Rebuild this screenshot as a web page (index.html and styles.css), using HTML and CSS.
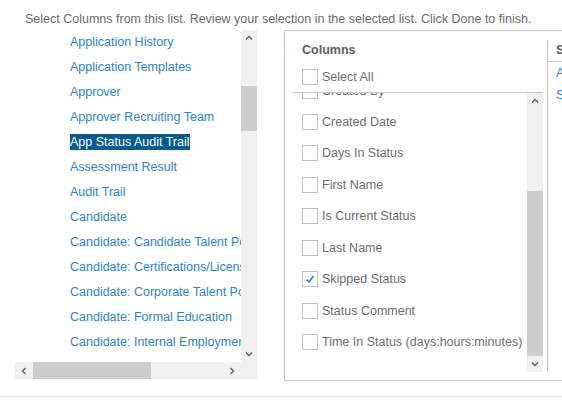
FILE: index.html
```
<!DOCTYPE html>
<html>
<head>
<meta charset="utf-8">
<link rel="stylesheet" href="styles.css">
</head>
<body>
<div class="page">
  <p class="intro">Select Columns from this list. Review your selection in the selected list. Click Done to finish.</p>
  <div class="main">
    <div class="left">
      <div class="hview">
        <div class="viewport">
          <ul class="tables">
            <li><span>Application History</span></li>
            <li><span>Application Templates</span></li>
            <li><span>Approver</span></li>
            <li><span>Approver Recruiting Team</span></li>
            <li><span class="active">App Status Audit Trail</span></li>
            <li><span>Assessment Result</span></li>
            <li><span>Audit Trail</span></li>
            <li><span>Candidate</span></li>
            <li><span>Candidate: Candidate Talent Pool</span></li>
            <li><span>Candidate: Certifications/Licenses</span></li>
            <li><span>Candidate: Corporate Talent Pool</span></li>
            <li><span>Candidate: Formal Education</span></li>
            <li><span>Candidate: Internal Employment</span></li>
            <li><span>Candidate: Geographic Mobility</span></li>
          </ul>
        </div>
        <div class="hscroll">
          <div class="sbtn hbtn"><svg width="8" height="8" viewBox="0 0 8 8"><polyline points="5.5,1 2.5,4 5.5,7" fill="none" stroke="#5f5f5f" stroke-width="1.4"/></svg></div>
          <div class="hthumb"></div>
          <div class="htrack"></div>
          <div class="sbtn hbtn"><svg width="8" height="8" viewBox="0 0 8 8"><polyline points="2.5,1 5.5,4 2.5,7" fill="none" stroke="#5f5f5f" stroke-width="1.4"/></svg></div>
        </div>
      </div>
      <div class="vscroll">
        <div class="sbtn vbtn"><svg width="8" height="8" viewBox="0 0 8 8"><polyline points="1,5.5 4,2.5 7,5.5" fill="none" stroke="#5f5f5f" stroke-width="1.4"/></svg></div>
        <div class="vtrack left-track"><div class="vthumb left-thumb"></div></div>
        <div class="sbtn vbtn"><svg width="8" height="8" viewBox="0 0 8 8"><polyline points="1,2.5 4,5.5 7,2.5" fill="none" stroke="#5f5f5f" stroke-width="1.4"/></svg></div>
        <div class="corner"></div>
      </div>
    </div>

    <div class="right">
      <div class="colpanel">
        <div class="colhead">Columns</div>
        <div class="row selall"><span class="cb"></span><span class="lbl">Select All</span></div>
        <div class="collist">
          <div class="colview">
            <div class="items">
              <div class="row"><span class="cb"></span><span class="lbl">Created By</span></div>
              <div class="row"><span class="cb"></span><span class="lbl">Created Date</span></div>
              <div class="row"><span class="cb"></span><span class="lbl">Days In Status</span></div>
              <div class="row"><span class="cb"></span><span class="lbl">First Name</span></div>
              <div class="row"><span class="cb"></span><span class="lbl">Is Current Status</span></div>
              <div class="row"><span class="cb"></span><span class="lbl">Last Name</span></div>
              <div class="row"><span class="cb checked"><svg width="14" height="14" viewBox="0 0 14 14"><polyline points="3.5,7.5 6,10 10.5,4" fill="none" stroke="#1a73d0" stroke-width="1.4"/></svg></span><span class="lbl">Skipped Status</span></div>
              <div class="row"><span class="cb"></span><span class="lbl">Status Comment</span></div>
              <div class="row"><span class="cb"></span><span class="lbl">Time In Status (days:hours:minutes)</span></div>
            </div>
          </div>
          <div class="vscroll inner">
            <div class="sbtn vbtn"><svg width="8" height="8" viewBox="0 0 8 8"><polyline points="1,5.5 4,2.5 7,5.5" fill="none" stroke="#5f5f5f" stroke-width="1.4"/></svg></div>
            <div class="vtrack inner-track"><div class="vthumb inner-thumb"></div></div>
            <div class="sbtn vbtn"><svg width="8" height="8" viewBox="0 0 8 8"><polyline points="1,2.5 4,5.5 7,2.5" fill="none" stroke="#5f5f5f" stroke-width="1.4"/></svg></div>
          </div>
        </div>
      </div>
      <div class="selpanel">
        <div class="selhead">Selected Columns</div>
        <ul class="sellist">
          <li>Application ID</li>
          <li>Status</li>
        </ul>
      </div>
    </div>
  </div>
  <div class="divider"></div>
</div>
</body>
</html>
```

FILE: styles.css
```
* { box-sizing: border-box; }
html, body {
  margin: 0;
  padding: 0;
  overflow: hidden;
  background: #ffffff;
}
body {
  font-family: "Liberation Sans", Arial, sans-serif;
  font-size: 12.5px;
  color: #6a6d70;
}
.page {
  width: 562px;
  height: 418px;
  overflow: hidden;
}
.intro {
  margin: 0;
  height: 30px;
  padding: 11px 0 0 25px;
  line-height: 16px;
  white-space: nowrap;
  color: #6a6d70;
}
.main {
  display: flex;
  align-items: flex-start;
  padding-left: 15px;
  height: 351px;
}
.left {
  display: flex;
  width: 242px;
  height: 349px;
  flex: none;
}
.hview {
  width: 226px;
  display: flex;
  flex-direction: column;
}
.viewport {
  height: 332px;
  overflow: hidden;
}
.tables {
  list-style: none;
  margin: 0;
  padding: 0 0 0 55px;
  white-space: nowrap;
}
.tables li {
  height: 25px;
  line-height: 25px;
  color: #2f83c9;
}
.tables .active {
  background: #085b8f;
  color: #ffffff;
  padding: 1px 0;
}
.hscroll {
  height: 17px;
  display: flex;
  background: #f0f0f0;
}
.sbtn {
  display: flex;
  align-items: center;
  justify-content: center;
  background: #f0f0f0;
  flex: none;
}
.hbtn {
  width: 18px;
  height: 17px;
}
.hthumb {
  width: 118px;
  height: 17px;
  background: #cdcdcd;
}
.htrack { flex: 1; }
.vscroll {
  width: 16px;
  display: flex;
  flex-direction: column;
  background: #f0f0f0;
  flex: none;
}
.vbtn {
  height: 16px;
  width: 16px;
}
.vtrack {
  flex: 1;
  display: flex;
  flex-direction: column;
}
.left-track { padding-top: 40px; }
.left-thumb { height: 45px; }
.vthumb { background: #cdcdcd; }
.corner { height: 17px; }

.right {
  margin-left: 27px;
  width: 420px;
  height: 351px;
  border: 1px solid #c8c8c8;
  flex: none;
  display: flex;
  align-items: flex-start;
  padding: 9px 0 0 8px;
}
.colpanel {
  width: 255px;
  height: 332px;
  border-right: 1px solid #c8c8c8;
  flex: none;
  display: flex;
  flex-direction: column;
}
.colhead {
  height: 22px;
  line-height: 20px;
  padding-left: 9px;
  font-weight: bold;
  color: #5b5e61;
}
.row {
  display: flex;
  align-items: center;
  white-space: nowrap;
}
.selall { height: 30px; }
.cb {
  width: 16px;
  height: 16px;
  border: 1px solid #c2c2c2;
  background: #fff;
  margin-left: 9px;
  margin-right: 4px;
  flex: none;
  display: flex;
  align-items: center;
  justify-content: center;
}
.lbl { color: #6a6d70; }
.collist {
  width: 250px;
  height: 281px;
  border-top: 1px solid #c8c8c8;
  display: flex;
}
.colview {
  width: 234px;
  overflow: hidden;
}
.items { margin-top: -18px; }
.items .row { height: 31.43px; }
.inner-track { padding-top: 82px; }
.inner-thumb { flex: 1; }

.selpanel {
  flex: 1;
  display: flex;
  flex-direction: column;
}
.selhead {
  height: 22px;
  line-height: 20px;
  padding-left: 8px;
  font-weight: bold;
  color: #5b5e61;
  border-bottom: 1px solid #c8c8c8;
  white-space: nowrap;
}
.sellist {
  list-style: none;
  margin: 0;
  padding: 0 0 0 8px;
}
.sellist li {
  height: 22px;
  line-height: 22px;
  color: #2f83c9;
}
.divider {
  height: 1px;
  background: #e6e6e6;
  margin-top: 15px;
}
```
